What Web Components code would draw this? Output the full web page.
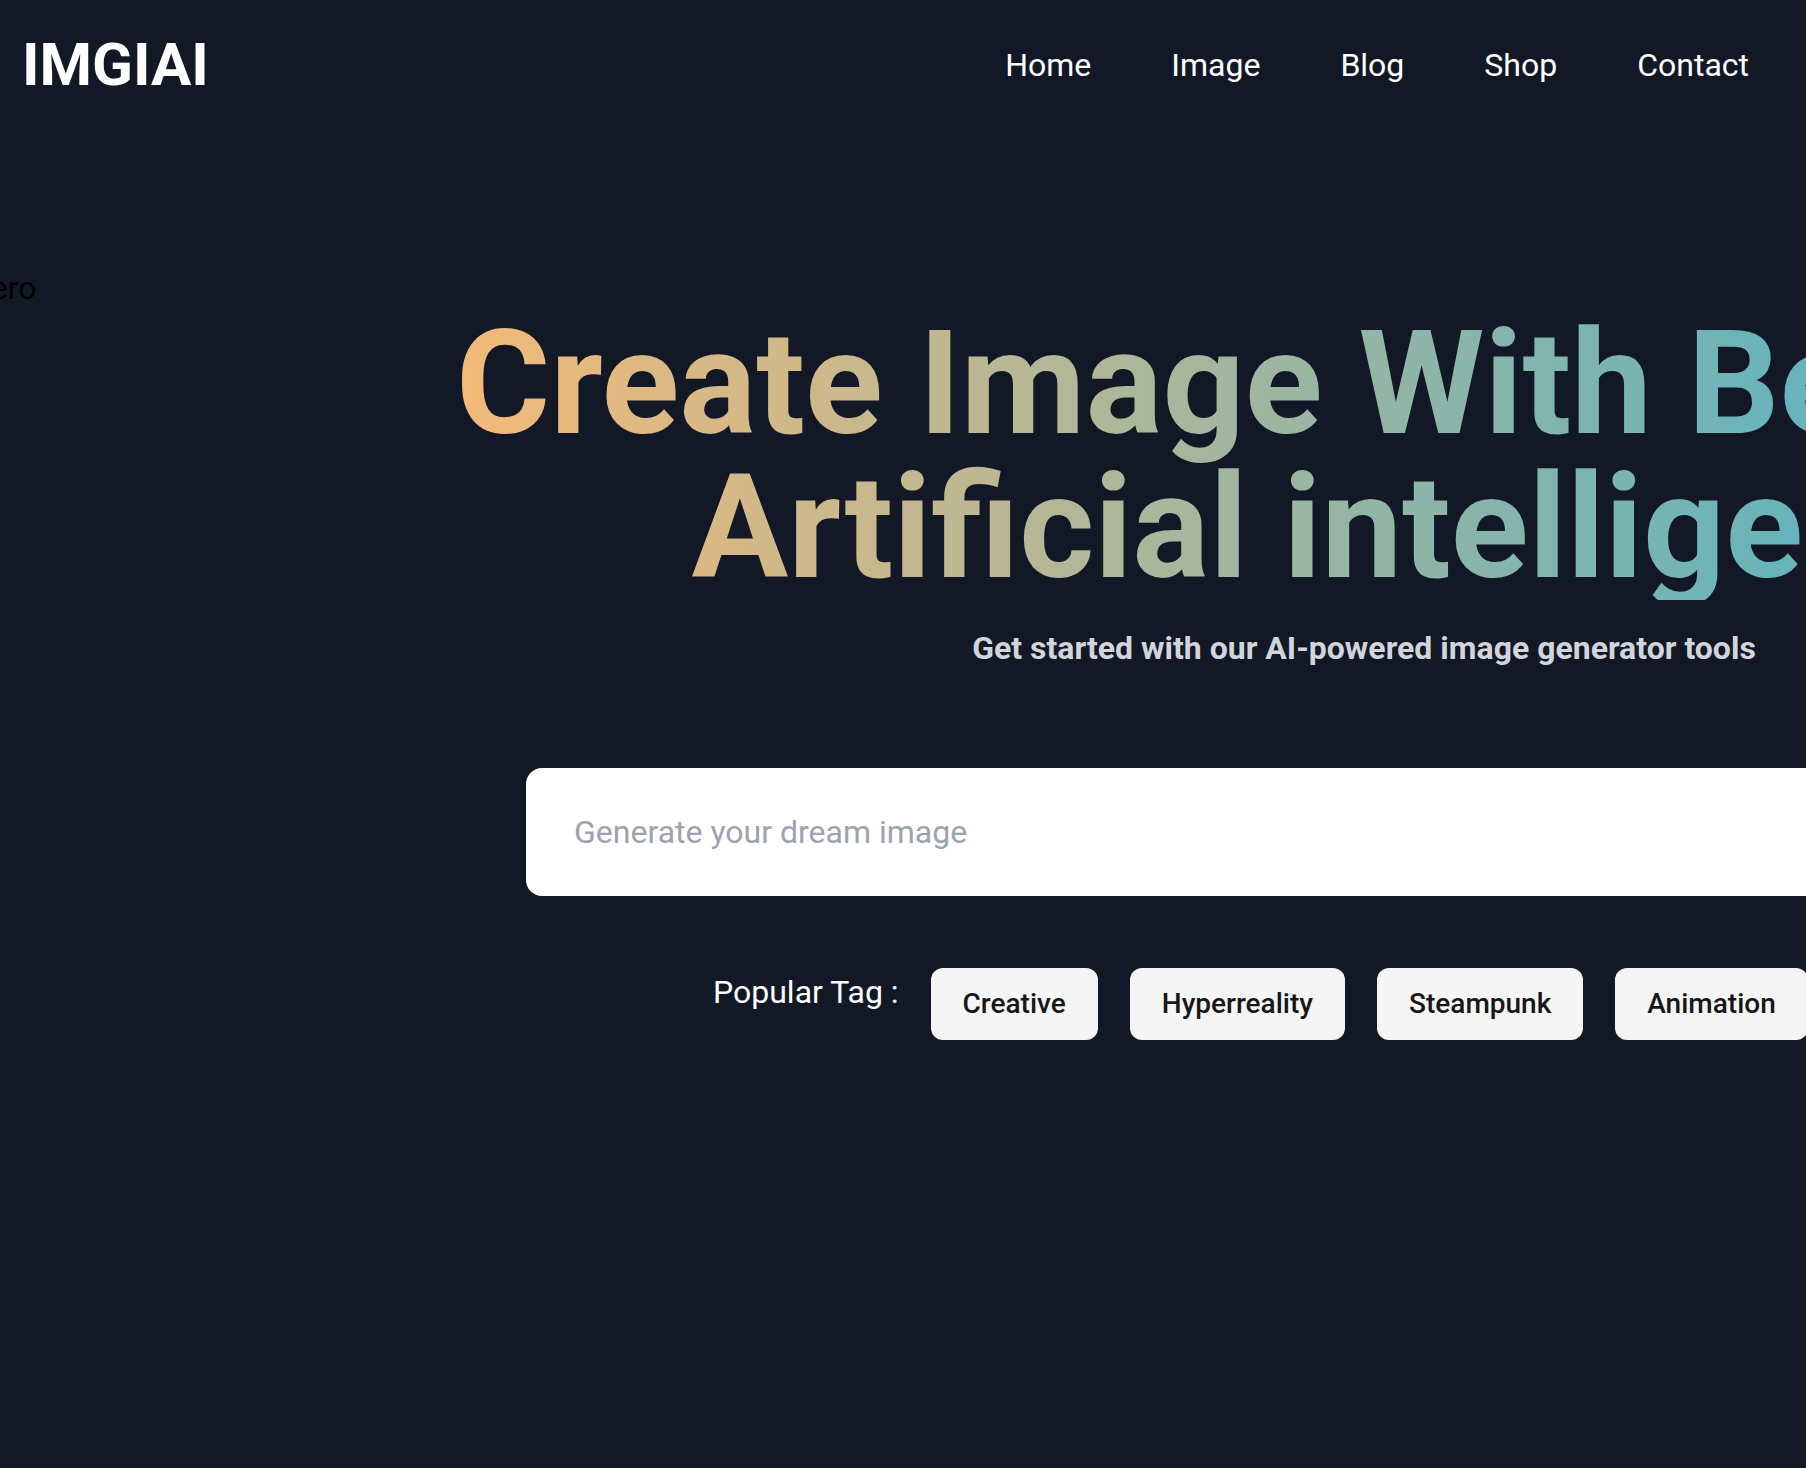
<!DOCTYPE html>
<html lang="en">
<head>
<meta charset="utf-8">
<title>IMGIAI</title>
<style>
  body { margin: 0; min-height: 100vh; background: #121826; color: #fff; font: 32px/48px Roboto, sans-serif; overflow-x: hidden; }
</style>
</head>
<body>
<site-header>
  <nav-link href="#home">Home</nav-link>
  <nav-link href="#image">Image</nav-link>
  <nav-link href="#blog">Blog</nav-link>
  <nav-link href="#shop">Shop</nav-link>
  <nav-link href="#contact">Contact</nav-link>
</site-header>
<hero-section>
  <hero-title>Create Image With Best And<br>Artificial intelligence</hero-title>
  <span slot="subtitle">Get started with our AI-powered image generator tools</span>
  <prompt-box slot="prompt"></prompt-box>
  <tag-list slot="tags" label="Popular Tag :">
    <tag-button>Creative</tag-button>
    <tag-button>Hyperreality</tag-button>
    <tag-button>Steampunk</tag-button>
    <tag-button>Animation</tag-button>
  </tag-list>
</hero-section>
<script>
const define = (name, html, setup) => customElements.define(name, class extends HTMLElement {
  constructor() {
    super();
    this.attachShadow({ mode: 'open' }).innerHTML = html;
  }
  connectedCallback() { if (setup) setup(this, this.shadowRoot); }
});

define('nav-link', `
  <style>
    :host { display: block; }
    a { color: inherit; text-decoration: none; }
  </style>
  <a><slot></slot></a>`,
  (el, root) => { root.querySelector('a').href = el.getAttribute('href'); });

define('site-header', `
  <style>
    :host { display: block; }
    header { display: flex; align-items: center; justify-content: space-between; height: 130px; padding: 0 57px 0 22px; }
    .logo { color: #fff; text-decoration: none; font-size: 60px; line-height: 72px; font-weight: 700; }
    nav { display: flex; gap: 80px; }
  </style>
  <header>
    <a class="logo" href="#home">IMGIAI</a>
    <nav aria-label="Main"><slot></slot></nav>
  </header>`);

define('hero-title', `
  <style>
    :host { display: block; }
    h1 { margin: 0; font-size: 144px; line-height: 144px; font-weight: 700; text-align: center; white-space: nowrap;
      color: transparent; background: linear-gradient(to right, #fdba74, #2bb1d6); -webkit-background-clip: text; background-clip: text; }
  </style>
  <h1><slot></slot></h1>`);

define('prompt-box', `
  <style>
    :host { display: block; }
    input { display: block; box-sizing: border-box; width: 100%; height: 128px; padding: 0 48px; border: 0; border-radius: 16px;
      background: #fff; color: #111827; font: inherit; outline: none; }
    input::placeholder { color: #9ca3af; opacity: 1; }
  </style>
  <input type="text" aria-label="Generate your dream image" placeholder="Generate your dream image">`);

define('tag-button', `
  <style>
    :host { display: block; }
    button { display: block; height: 72px; padding: 0 32px; border: 0; border-radius: 12px; background: #f5f5f5; color: #171717;
      font: 500 28px/40px Roboto, sans-serif; cursor: pointer; }
  </style>
  <button type="button"><slot></slot></button>`);

define('tag-list', `
  <style>
    :host { display: flex; align-items: flex-start; gap: 32px; white-space: nowrap; }
  </style>
  <span class="label"></span><slot></slot>`,
  (el, root) => { root.querySelector('.label').textContent = el.getAttribute('label'); });

define('hero-section', `
  <style>
    :host { display: block; overflow: hidden; padding-top: 134px; }
    .alt { margin-left: -32px; color: #000; }
    .content { width: 2024px; margin-left: 352px; }
    p { margin: 24px 0 96px; text-align: center; font-weight: 700; color: #d1d5db; }
    .prompt { padding: 0 174px; }
    .tags { padding: 72px 0 0 361px; }
  </style>
  <div class="alt">Hero</div>
  <div class="content">
    <slot></slot>
    <p><slot name="subtitle"></slot></p>
    <div class="prompt"><slot name="prompt"></slot></div>
    <div class="tags"><slot name="tags"></slot></div>
  </div>`);
</script>
</body>
</html>
